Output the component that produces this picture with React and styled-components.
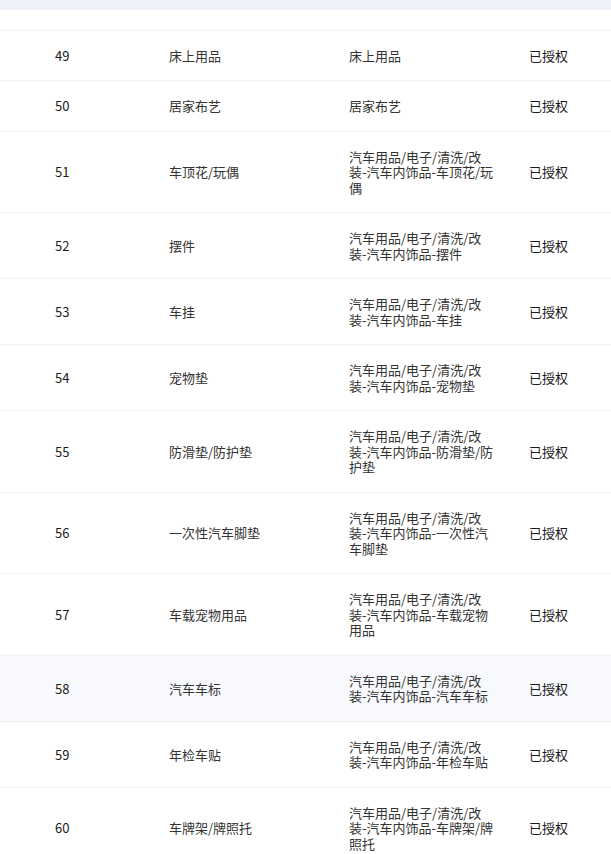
import React from 'react';
import styled, { createGlobalStyle } from 'styled-components';

const GlobalStyle = createGlobalStyle`
  html, body {
    margin: 0;
    padding: 0;
    background: #fff;
  }
  body {
    font-family: "Noto Sans CJK SC", "Noto Sans", sans-serif;
    font-size: 13px;
  }
`;

const TopBand = styled.div`
  height: 10px;
  background: #eef1f8;
`;

const Spacer = styled.div`
  height: 20px;
  border-bottom: 1px solid #f0f0f0;
`;

const Table = styled.table`
  width: 611px;
  table-layout: fixed;
  border-collapse: collapse;
`;

const Row = styled.tr`
  background: ${({ $hover }) => ($hover ? '#f8f9fc' : '#fff')};
  border-bottom: 1px solid #f0f0f0;
`;

const Cell = styled.td`
  padding: 16.9px ${({ $right }) => $right || 16}px 16.9px ${({ $left }) => $left || 16}px;
  line-height: 15.6px;
  vertical-align: middle;
  color: ${({ $dark }) => ($dark ? '#1a1a1a' : '#333')};
  word-break: break-all;
`;

const prefix = '汽车用品/电子/清洗/改装-汽车内饰品-';

const rows = [
  { id: 49, name: '床上用品', path: '床上用品' },
  { id: 50, name: '居家布艺', path: '居家布艺' },
  { id: 51, name: '车顶花/玩偶', path: prefix + '车顶花/玩偶' },
  { id: 52, name: '摆件', path: prefix + '摆件' },
  { id: 53, name: '车挂', path: prefix + '车挂' },
  { id: 54, name: '宠物垫', path: prefix + '宠物垫' },
  { id: 55, name: '防滑垫/防护垫', path: prefix + '防滑垫/防护垫' },
  { id: 56, name: '一次性汽车脚垫', path: prefix + '一次性汽车脚垫' },
  { id: 57, name: '车载宠物用品', path: prefix + '车载宠物用品' },
  { id: 58, name: '汽车车标', path: prefix + '汽车车标', hover: true },
  { id: 59, name: '年检车贴', path: prefix + '年检车贴' },
  { id: 60, name: '车牌架/牌照托', path: prefix + '车牌架/牌照托' },
];

const App = () => (
  <>
    <GlobalStyle />
    <TopBand />
    <Spacer />
    <Table>
      <colgroup>
        <col style={{ width: 153 }} />
        <col style={{ width: 180 }} />
        <col style={{ width: 180 }} />
        <col />
      </colgroup>
      <tbody>
        {rows.map((r) => (
          <Row key={r.id} $hover={r.hover}>
            <Cell $left={55} $dark>{r.id}</Cell>
            <Cell>{r.name}</Cell>
            <Cell $right={19}>{r.path}</Cell>
            <Cell $dark>已授权</Cell>
          </Row>
        ))}
      </tbody>
    </Table>
  </>
);

export default App;
